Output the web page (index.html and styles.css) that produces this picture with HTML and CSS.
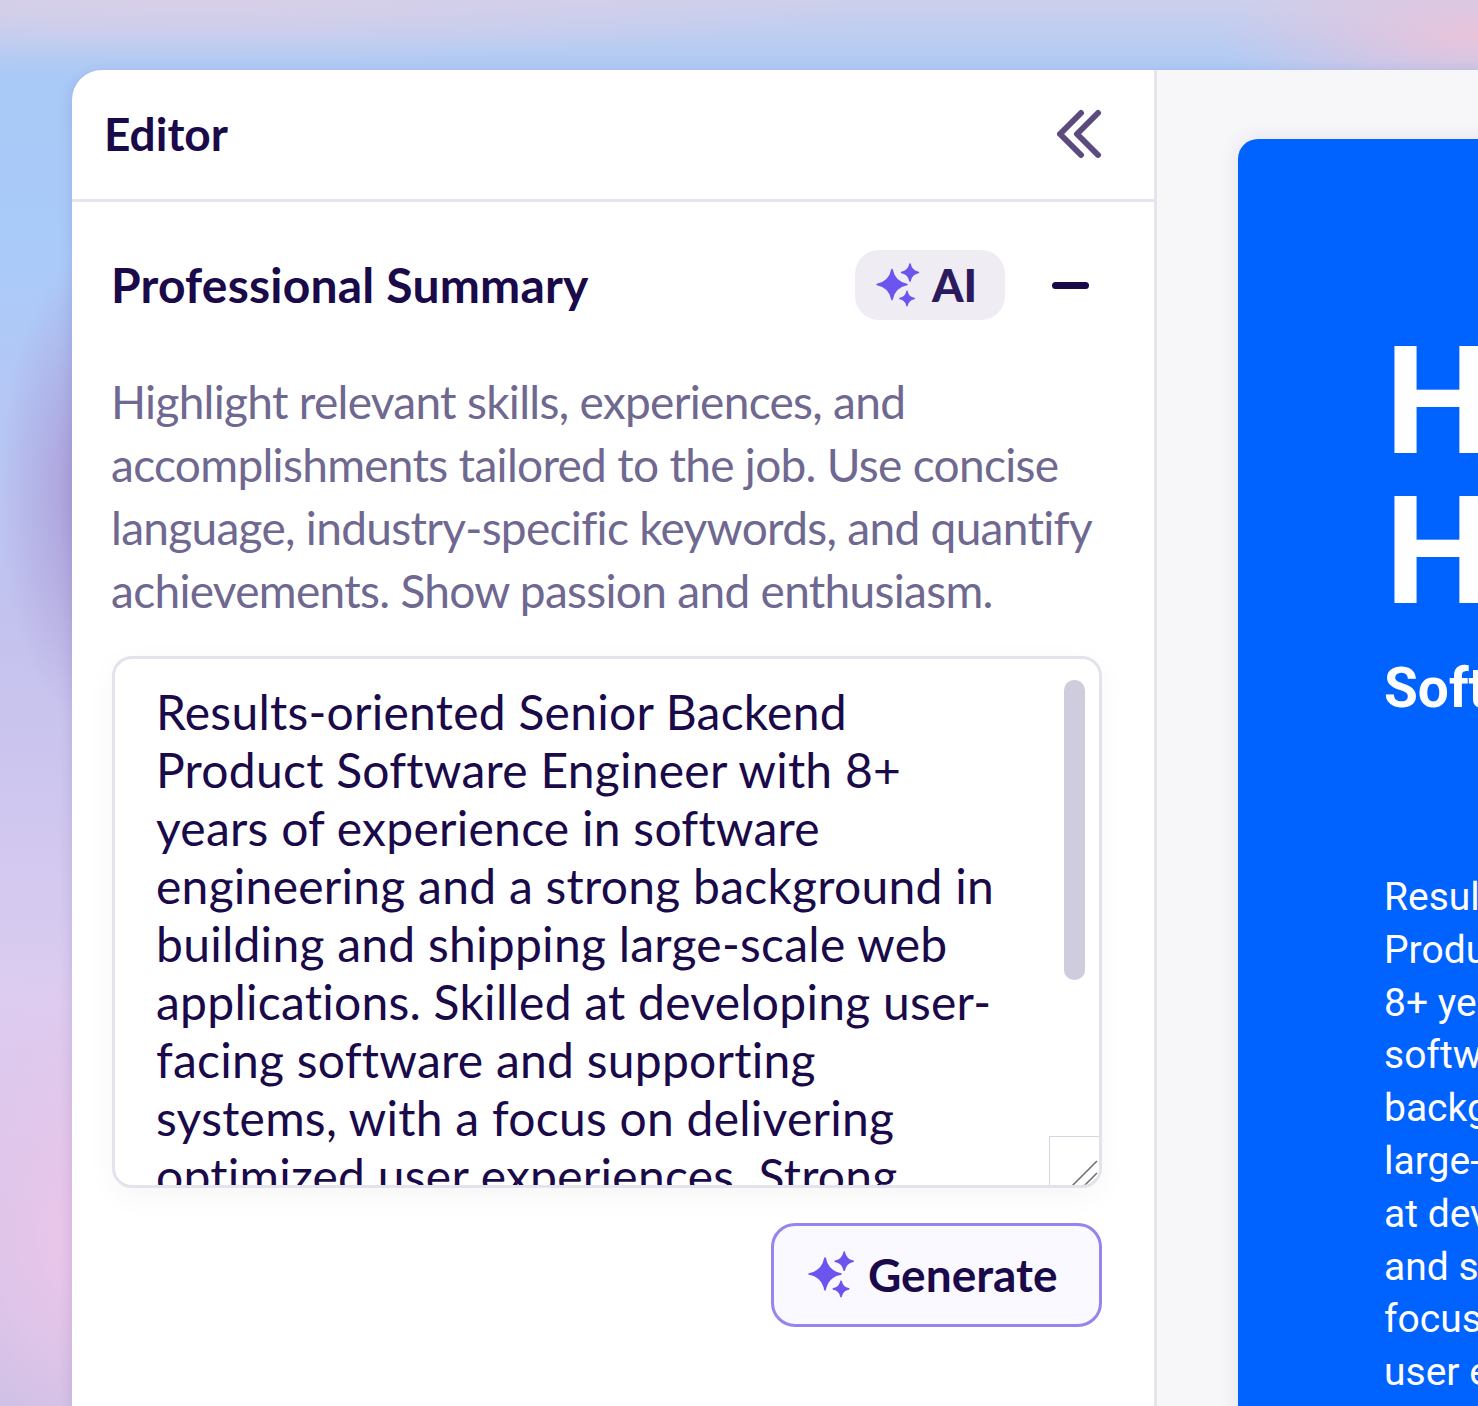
FILE: index.html
```html
<!DOCTYPE html>
<html lang="en">
<head>
  <meta charset="UTF-8">
  <title>Resume Editor</title>
  <link rel="stylesheet" href="styles.css">
</head>

<body>

<svg class="defs" width="0" height="0">
  <symbol id="sparkle" viewBox="0 0 46 44">
    <path d="M16 6.500C17.500 14 22.750 20 31 21.500C22.750 23 17.500 29 16 36.500C14.500 29 9.250 23 1 21.500C9.250 20 14.500 14 16 6.500Z"/>
    <path d="M34 1C34.850 5.250 37.800 8.650 42.500 9.500C37.800 10.350 34.850 13.750 34 18C33.150 13.750 30.200 10.350 25.500 9.500C30.200 8.650 33.150 5.250 34 1Z"/>
    <path d="M31 28.300C31.700 31.900 34.250 34.800 38.200 35.500C34.250 36.200 31.700 39.100 31 42.700C30.300 39.100 27.750 36.200 23.800 35.500C27.750 34.800 30.300 31.900 31 28.300Z"/>
  </symbol>
</svg>

<div class="window">
  <div class="editor">
    <div class="editor-header">
      <h1>Editor</h1>
      <svg class="collapse" width="46" height="50" viewBox="0 0 46 50">
        <path d="M24 4L3 25L24 46M41 4L20 25L41 46"/>
      </svg>
    </div>

    <div class="section">
      <div class="section-head">
        <h2>Professional Summary</h2>
        <div class="ai-pill">
          <svg class="sparkle"><use href="#sparkle"/></svg>
          <span>AI</span>
        </div>
        <div class="minus-btn"><div class="minus"></div></div>
      </div>

      <p class="hint">Highlight relevant skills, experiences, and accomplishments tailored to the job. Use concise language, industry-specific keywords, and quantify achievements. Show passion and enthusiasm.</p>

      <div class="summary-box">
        <div class="summary-text">Results-oriented Senior Backend Product Software Engineer with 8+ years of experience in software engineering and a strong background in building and shipping large-scale web applications. Skilled at developing user-facing software and supporting systems, with a focus on delivering optimized user experiences. Strong</div>
        <div class="thumb"></div>
        <div class="resizer">
          <svg width="48" height="50" viewBox="0 0 48 50">
            <path d="M22 49L47 24M34 49L47 36"/>
          </svg>
        </div>
      </div>

      <div class="actions">
        <button class="generate">
          <svg class="sparkle"><use href="#sparkle"/></svg>
          Generate
        </button>
      </div>
    </div>
  </div>

  <div class="preview">
    <div class="paper">
      <div class="name">Henry<br>Hayes</div>
      <div class="role">Software Engineer</div>
      <p class="paper-text">Results-oriented Senior Backend<br>Product Software Engineer with<br>8+ years of experience in<br>software engineering and a strong<br>background in building and shipping<br>large-scale web applications. Skilled<br>at developing user-facing software<br>and supporting systems, with a<br>focus on delivering optimized<br>user experiences.</p>
    </div>
  </div>
</div>

</body>
</html>
```

FILE: styles.css
```css
* { box-sizing: border-box; }

body {
  margin: 0;
  height: 1406px;
  overflow: hidden;
  padding: 70px 0 0 72px;
  font-family: 'Lato', sans-serif;
  font-variant-ligatures: none;
  color: #1a0a4a;
  background:
    radial-gradient(ellipse 200px 280px at 90px 1240px, #edc6ea 0%, rgba(237, 198, 234, 0) 100%),
    radial-gradient(ellipse 85px 230px at 85px 490px, rgba(165, 140, 205, 0.72) 0%, rgba(165, 140, 205, 0) 100%),
    radial-gradient(ellipse 260px 80px at 1478px 35px, #e9c3da 0%, rgba(233, 195, 218, 0) 100%),
    radial-gradient(ellipse 700px 60px at 200px 0, #d8cfe8 0%, rgba(216, 207, 232, 0) 100%),
    linear-gradient(180deg, #cdd0ec 0, #a9c9f6 80px, #a9cbfa 240px, #c3c2ee 620px, #dcccf0 1000px, #c6bfe4 1406px);
}

.defs { position: absolute; }

.window {
  display: flex;
  width: 1406px;
  height: 1336px;
  overflow: hidden;
  background: #fff;
  border-radius: 30px 0 0 0;
  box-shadow: 0 4px 14px rgba(70, 50, 130, 0.16);
}

.editor {
  width: 1085px;
  flex-shrink: 0;
  border-right: 3px solid #e6e5ee;
}

.editor-header {
  display: flex;
  justify-content: space-between;
  align-items: center;
  height: 132px;
  padding: 0 51px 2px 32px;
  border-bottom: 3px solid #e6e5ee;
}

.editor-header h1 {
  margin: 0;
  font-size: 46px;
  font-weight: 700;
  line-height: 1;
}

.collapse path {
  fill: none;
  stroke: #5b4a80;
  stroke-width: 6;
  stroke-linecap: round;
  stroke-linejoin: round;
}

.section {
  padding: 48px 52px 0 40px;
}

.section-head {
  display: flex;
  align-items: center;
  height: 70px;
}

.section-head h2 {
  margin: 0 0 0 -1px;
  flex: 1;
  font-size: 48px;
  font-weight: 700;
  line-height: 1;
  letter-spacing: 0.2px;
}

.sparkle {
  width: 46px;
  height: 44px;
  flex-shrink: 0;
  fill: #6b55ee;
  stroke: #6b55ee;
  stroke-width: 1.500;
  stroke-linejoin: round;
}

.ai-pill {
  display: flex;
  align-items: center;
  gap: 10px;
  width: 150px;
  height: 70px;
  padding-left: 21px;
  border-radius: 24px;
  background: #efedf3;
  color: #2b1b5e;
  font-size: 45px;
  font-weight: 900;
}

.minus-btn {
  display: flex;
  justify-content: flex-end;
  width: 97px;
  padding-right: 13px;
}

.minus {
  width: 37px;
  height: 7px;
  border-radius: 4px;
  background: #1a0a4a;
}

.hint {
  margin: 50px -10px 0 -1px;
  font-size: 46px;
  line-height: 63px;
  letter-spacing: -0.7px;
  color: #6f6890;
}

.summary-box {
  position: relative;
  height: 532px;
  margin-top: 34px;
  padding: 24px 96px 0 41px;
  overflow: hidden;
  background: #fff;
  border: 3px solid #e4e3ec;
  border-radius: 20px;
  box-shadow: 0 8px 30px rgba(30, 10, 80, 0.04);
}

.summary-text {
  font-size: 48px;
  line-height: 58px;
  letter-spacing: 0.25px;
}

.thumb {
  position: absolute;
  top: 21px;
  right: 14px;
  width: 21px;
  height: 300px;
  border-radius: 10px;
  background: #cfcddd;
}

.resizer {
  position: absolute;
  right: 0;
  bottom: 0;
  width: 50px;
  height: 49px;
  background: #fff;
  border-top: 1px solid #d8d6e2;
  border-left: 1px solid #d8d6e2;
}

.resizer svg {
  display: block;
}

.resizer path {
  fill: none;
  stroke: #6e6e6e;
  stroke-width: 1.500;
}

.actions {
  display: flex;
  justify-content: flex-end;
  margin-top: 35px;
}

.generate {
  display: flex;
  align-items: center;
  gap: 11px;
  width: 331px;
  height: 104px;
  padding: 0 0 2px 34px;
  border: 3px solid #9585ec;
  border-radius: 24px;
  background: #faf9ff;
  color: #1a0a4a;
  font-family: inherit;
  font-size: 46px;
  font-weight: 700;
}

.generate .sparkle {
  width: 49px;
  height: 47px;
}

.preview {
  flex: 1;
  overflow: hidden;
  padding: 69px 0 0 81px;
  background: #f7f7fa;
}

.paper {
  width: 1000px;
  height: 1400px;
  padding: 188px 0 0 147px;
  border-radius: 20px 0 0 0;
  background: #0062ff;
  color: #fff;
  font-family: 'Roboto', sans-serif;
  box-shadow: 0 0 20px rgba(40, 30, 90, 0.1);
}

.name {
  font-size: 150px;
  font-weight: 700;
  line-height: 150px;
}

.role {
  margin: 31px 0 0 -1px;
  font-size: 55px;
  font-weight: 700;
  line-height: 60px;
}

.paper-text {
  margin: 153px 0 0 -1px;
  font-size: 39px;
  line-height: 52.8px;
}
```
